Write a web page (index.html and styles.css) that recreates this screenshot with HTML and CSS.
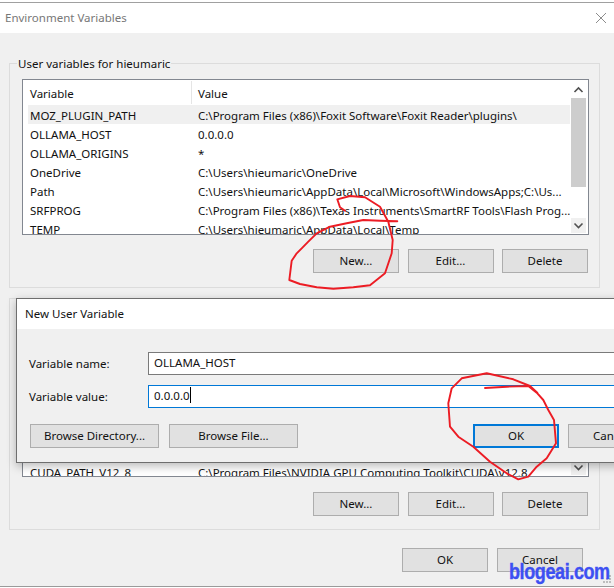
FILE: index.html
```html
<!DOCTYPE html>
<html lang="en">
<head>
<meta charset="utf-8">
<title>Environment Variables</title>
<link rel="stylesheet" href="styles.css">
</head>
<body>
<div class="window">
  <div class="titlebar">
    <span class="title-text">Environment Variables</span>
    <svg class="close" width="12" height="12" viewBox="0 0 12 12"><path d="M1 1l10 10M11 1L1 11" stroke="#8c8c8c" fill="none"/></svg>
  </div>
  <div class="body">
    <fieldset class="group group-user">
      <legend>User variables for hieumaric</legend>
      <div class="list list-user">
        <div class="list-main">
          <div class="head"><div class="cell-a">Variable</div><div class="cell-b">Value</div></div>
          <div class="row selected"><div class="cell-a">MOZ_PLUGIN_PATH</div><div class="cell-b">C:\Program Files (x86)\Foxit Software\Foxit Reader\plugins\</div></div>
          <div class="row"><div class="cell-a">OLLAMA_HOST</div><div class="cell-b">0.0.0.0</div></div>
          <div class="row"><div class="cell-a">OLLAMA_ORIGINS</div><div class="cell-b">*</div></div>
          <div class="row"><div class="cell-a">OneDrive</div><div class="cell-b">C:\Users\hieumaric\OneDrive</div></div>
          <div class="row"><div class="cell-a">Path</div><div class="cell-b">C:\Users\hieumaric\AppData\Local\Microsoft\WindowsApps;C:\Us...</div></div>
          <div class="row"><div class="cell-a">SRFPROG</div><div class="cell-b">C:\Program Files (x86)\Texas Instruments\SmartRF Tools\Flash Prog...</div></div>
          <div class="row"><div class="cell-a">TEMP</div><div class="cell-b">C:\Users\hieumaric\AppData\Local\Temp</div></div>
        </div>
        <div class="scrollbar">
          <svg class="arrow" width="15" height="17" viewBox="0 0 15 17"><path d="M3.500 11l4-4 4 4" stroke="#505050" stroke-width="1.600" fill="none"/></svg>
          <div class="thumb"></div>
          <svg class="arrow arrow-down" width="15" height="15" viewBox="0 0 15 15"><path d="M3.500 5.500l4 4 4-4" stroke="#505050" stroke-width="1.600" fill="none"/></svg>
        </div>
      </div>
      <div class="btn-row">
        <button class="btn">New...</button>
        <button class="btn">Edit...</button>
        <button class="btn">Delete</button>
      </div>
    </fieldset>
    <div class="group group-system">
      <div class="list list-system">
        <div class="list-main list-main-end">
          <div class="row"><div class="cell-a">CUDA_PATH_V12_8</div><div class="cell-b">C:\Program Files\NVIDIA GPU Computing Toolkit\CUDA\v12.8</div></div>
        </div>
        <div class="scrollbar scrollbar-end">
          <svg class="arrow arrow-down" width="15" height="15" viewBox="0 0 15 15"><path d="M3.500 5.500l4 4 4-4" stroke="#505050" stroke-width="1.600" fill="none"/></svg>
        </div>
      </div>
      <div class="btn-row">
        <button class="btn">New...</button>
        <button class="btn">Edit...</button>
        <button class="btn">Delete</button>
      </div>
    </div>
    <div class="footer">
      <button class="btn">OK</button>
      <button class="btn">Cancel</button>
    </div>
  </div>
</div>

<div class="dialog">
  <div class="dialog-title">New User Variable</div>
  <div class="dialog-body">
    <div class="field"><label>Variable name:</label><div class="input">OLLAMA_HOST</div></div>
    <div class="field"><label>Variable value:</label><div class="input input-focus">0.0.0.0<span class="caret"></span></div></div>
    <div class="dialog-buttons">
      <button class="btn btn-wide">Browse Directory...</button>
      <button class="btn btn-wide">Browse File...</button>
      <span class="spacer"></span>
      <button class="btn btn-default">OK</button>
      <button class="btn btn-cancel">Cancel</button>
    </div>
  </div>
</div>

<svg class="ink" width="614" height="588" viewBox="0 0 614 588">
  <polyline points="397.300,221.300 380,220.700 363.300,220 346.700,223.300 330,226.700 316.700,233.300 308.300,241.700 301.700,248.300 296.700,253.300 291.700,260.700 289.300,280 300,284 316.700,287.300 333.300,288.700 353.300,287.300 370,285.300 385,273.300 391.700,253.300 392.700,240 388.300,221.700 380,206.700 365,197.300 350,196 337.300,199.300 340,207.300 345,210.700"/>
  <polyline points="485,388 506.700,386.700 528.300,386 536.700,392.700 543.300,400 548.300,410 554,420 556,443.300 546.700,458.300 536.700,466.700 528.300,476.700 518.300,479.300 506.700,473.300 490,461.700 473.300,446.700 458.300,436.700 450,426.700 448.300,403.300 451.700,388.300 461.700,378.300 486.700,373.300 513.300,379.300 530,386 537.300,392.700"/>
</svg>
<svg class="grip" width="9" height="9" viewBox="0 0 9 9">
  <path d="M6 0h2v2H6zM3 3h2v2H3zM6 3h2v2H6zM0 6h2v2H0zM3 6h2v2H3zM6 6h2v2H6z" fill="#bdbdbd"/>
</svg>
<div class="watermark">blogeai.com</div>
</body>
</html>
```

FILE: styles.css
```css
* { box-sizing: border-box; }
html, body { margin: 0; padding: 0; }
body {
  width: 614px;
  height: 588px;
  position: relative;
  overflow: hidden;
  background: #fff;
  font: 11.500px/16px "Noto Sans", "Open Sans", sans-serif;
  color: #111;
}
.window {
  margin-top: 2px;
  height: 585px;
  border-top: 1px solid #a0a0a0;
  border-bottom: 1px solid #9a9a9a;
  display: flex;
  flex-direction: column;
}
.titlebar {
  height: 30px;
  background: #fff;
  flex: none;
  display: flex;
  align-items: center;
  justify-content: space-between;
  padding: 0 7px 0 5px;
}
.title-text { color: #777; }
.body {
  flex: 1;
  background: #f0f0f0;
  padding: 22px 14px 0 9px;
  display: flex;
  flex-direction: column;
}
.group {
  margin: 0;
  padding: 0 10px 0 12px;
  border: 1px solid #dcdcdc;
  min-width: 0;
  display: flex;
  flex-direction: column;
}
.group legend {
  height: 16px;
  padding: 0 1px;
  margin-left: -5px;
  line-height: 18px;
}
.group-user { height: 233px; }
.group-user legend { margin-bottom: 8px; }
.group-system { height: 232px; margin-top: 10px; padding-bottom: 13px; }
.list {
  background: #fff;
  border: 1px solid #828790;
  display: flex;
  flex: none;
  overflow: hidden;
}
.list-user { height: 156px; }
.list-system { height: 30px; margin-top: auto; margin-bottom: 15px; border-top: 0; }
.list-main { flex: 1; min-width: 0; padding: 1px 0 0 5px; overflow: hidden; }
.list-main-end { display: flex; flex-direction: column; justify-content: flex-end; padding-top: 0; margin-bottom: -5px; }
.head, .row { display: flex; white-space: nowrap; }
.head { height: 24px; }
.head .cell-a { line-height: 25px; }
.head .cell-b { border-left: 1px solid #e5e5e5; height: 23px; line-height: 25px; padding-left: 6px; }
.row { height: 19px; line-height: 21px; }
.cell-a { width: 163px; padding-left: 2px; flex: none; }
.cell-b { padding-left: 7px; }
.selected { background: #f0f0f0; }
.scrollbar {
  width: 18px;
  flex: none;
  background: #fff;
  display: flex;
  flex-direction: column;
  align-items: center;
  padding: 1px 1px 1px 0;
}
.thumb { width: 15px; flex: 1; background: #cdcdcd; margin-bottom: 31px; }
.arrow { flex: none; }
.arrow-down { margin-top: auto; background: #f0f0f0; }
.btn-row {
  display: flex;
  justify-content: flex-end;
  gap: 8.500px;
  padding: 14px 1px 0 0;
}
.group-system .btn-row { padding-top: 0; }
.btn {
  width: 86px;
  height: 24px;
  flex: none;
  margin: 0;
  padding: 0;
  background: #e1e1e1;
  border: 1px solid #adadad;
  font: inherit;
  color: #111;
}
.footer {
  display: flex;
  justify-content: flex-end;
  gap: 9px;
  padding: 18px 17px 0 0;
}
.dialog {
  position: absolute;
  left: 16px;
  top: 298px;
  width: 640px;
  height: 165px;
  border: 1px solid #6e6e6e;
  background: #f0f0f0;
  box-shadow: 0 3px 9px rgba(0,0,0,.28);
  display: flex;
  flex-direction: column;
}
.dialog-title {
  height: 30px;
  flex: none;
  background: #fff;
  padding: 0 0 0 8px;
  line-height: 30px;
}
.dialog-body { padding: 23px 0 0 12px; flex: 1; }
.field { display: flex; align-items: center; height: 23px; margin-bottom: 10px; }
.field label { width: 119px; flex: none; }
.input {
  flex: 1;
  height: 23px;
  background: #fff;
  border: 1px solid #7a7a7a;
  line-height: 20px;
  padding-left: 5px;
}
.input-focus { border-color: #0078d7; }
.caret { display: inline-block; width: 1px; height: 16px; background: #000; vertical-align: -3px; }
.dialog-buttons { display: flex; margin: 16px 0 0 1px; }
.btn-wide { width: 129px; margin-right: 10px; }
.spacer { width: 165px; flex: none; }
.btn-default { border: 2px solid #0078d7; }
.btn-cancel { margin-left: 9px; }
.ink { position: absolute; left: 0; top: 0; pointer-events: none; }
.ink polyline { fill: none; stroke: #ec1c24; stroke-width: 1.900; stroke-linejoin: round; stroke-linecap: round; }
.grip { position: absolute; left: 603px; top: 575px; }
.watermark {
  position: absolute;
  left: 509px;
  top: 559px;
  font: bold 22px/26px "Liberation Sans", sans-serif;
  letter-spacing: -0.500px;
  color: #3d50f2;
  white-space: nowrap;
  transform: scaleX(.82);
  transform-origin: left center;
  -webkit-text-stroke: .4px #3d50f2;
}
```
